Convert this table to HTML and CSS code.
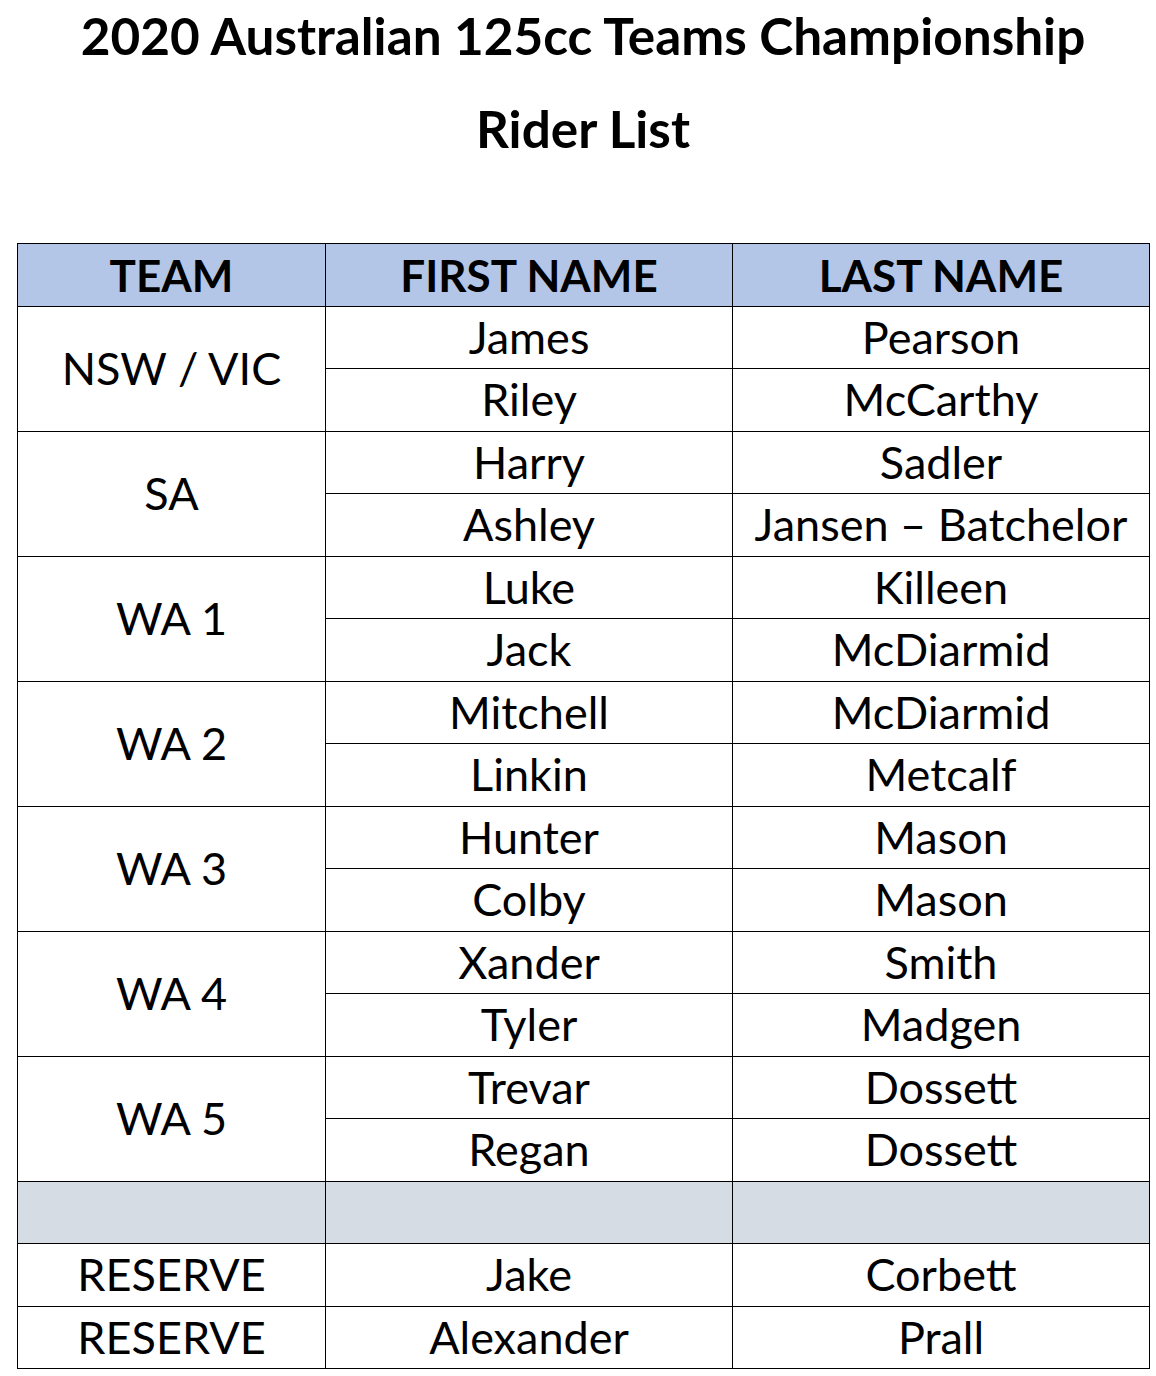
FILE: index.html
```html
<!DOCTYPE html>
<html>
<head>
<meta charset="utf-8">
<link rel="stylesheet" href="styles.css">
</head>
<body>
<div class="page">
  <h1 class="title">2020 Australian 125cc Teams Championship</h1>
  <h2 class="subtitle">Rider List</h2>
  <table class="riders">
    <colgroup>
      <col class="c-team">
      <col class="c-first">
      <col class="c-last">
    </colgroup>
    <thead>
      <tr class="head"><th>TEAM</th><th>FIRST NAME</th><th>LAST NAME</th></tr>
    </thead>
    <tbody>
      <tr><td rowspan="2">NSW / VIC</td><td>James</td><td>Pearson</td></tr>
      <tr><td>Riley</td><td>McCarthy</td></tr>
      <tr><td rowspan="2">SA</td><td>Harry</td><td>Sadler</td></tr>
      <tr><td>Ashley</td><td>Jansen – Batchelor</td></tr>
      <tr><td rowspan="2">WA 1</td><td>Luke</td><td>Killeen</td></tr>
      <tr><td>Jack</td><td>McDiarmid</td></tr>
      <tr><td rowspan="2">WA 2</td><td>Mitchell</td><td>McDiarmid</td></tr>
      <tr><td>Linkin</td><td>Metcalf</td></tr>
      <tr><td rowspan="2">WA 3</td><td>Hunter</td><td>Mason</td></tr>
      <tr><td>Colby</td><td>Mason</td></tr>
      <tr><td rowspan="2">WA 4</td><td>Xander</td><td>Smith</td></tr>
      <tr><td>Tyler</td><td>Madgen</td></tr>
      <tr><td rowspan="2">WA 5</td><td>Trevar</td><td>Dossett</td></tr>
      <tr><td>Regan</td><td>Dossett</td></tr>
      <tr class="blank"><td></td><td></td><td></td></tr>
      <tr><td>RESERVE</td><td>Jake</td><td>Corbett</td></tr>
      <tr><td>RESERVE</td><td>Alexander</td><td>Prall</td></tr>
    </tbody>
  </table>
</div>
</body>
</html>
```

FILE: styles.css
```css
html, body {
  margin: 0;
  padding: 0;
  background: #ffffff;
}

.page {
  font-family: Lato, "Liberation Sans", sans-serif;
  color: #000000;
  padding: 0 7px 0 17px;
}

.title,
.subtitle {
  margin: 0;
  text-align: center;
  font-weight: 700;
  font-size: 51.3px;
  line-height: 70px;
}

.subtitle {
  margin-top: 23px;
}

.riders {
  margin-top: 80px;
  border-collapse: collapse;
  table-layout: fixed;
  width: 1132px;
}

.c-team { width: 308px; }
.c-first { width: 407px; }
.c-last { width: 417px; }

.riders th,
.riders td {
  border: 1px solid #000000;
  padding: 0;
  height: 61.5px;
  text-align: center;
  vertical-align: middle;
  font-size: 45px;
  line-height: 1;
  white-space: nowrap;
}

.riders th {
  font-weight: 700;
  font-size: 44px;
}

.head th {
  background: #b4c6e7;
}

.blank td {
  background: #d6dce4;
}
```
